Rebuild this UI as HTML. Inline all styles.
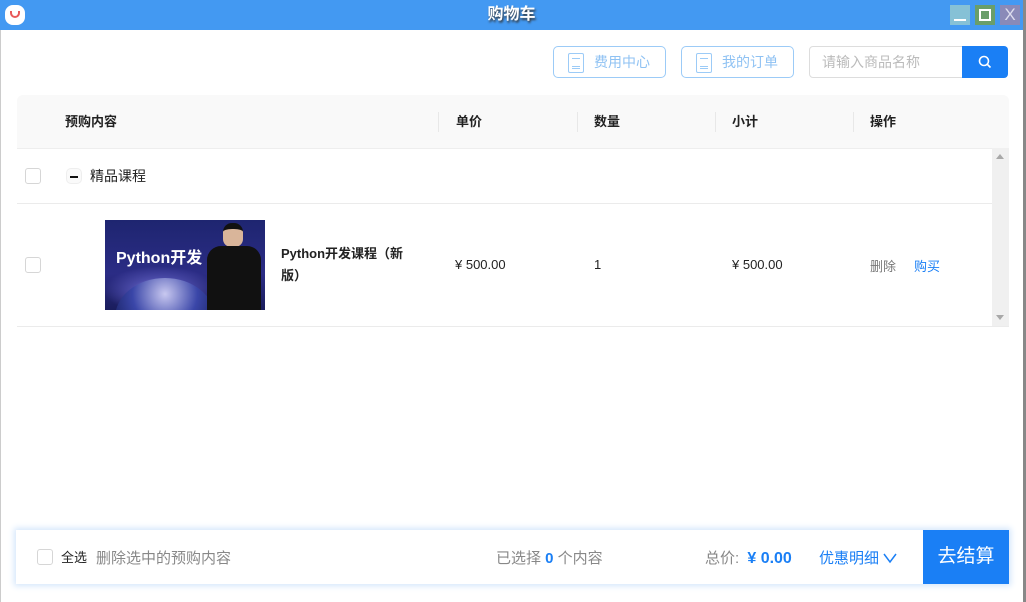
<!DOCTYPE html>
<html><head><meta charset="utf-8"><style>
*{margin:0;padding:0;box-sizing:border-box}
body{width:1026px;height:602px;overflow:hidden;background:#fff;font-family:"Liberation Sans","Noto Sans CJK SC",sans-serif;position:relative;font-size:13px;color:#222}
.abs{position:absolute}
.title{left:0;top:0;width:1023px;height:30px;background:#4399f2;color:#fff;text-align:center;line-height:30px;font-size:16px;font-weight:bold;text-shadow:1px 2px 2px #333}
.wb{top:5px;width:20px;height:20px}
.btn{top:46px;height:32px;border:1px solid #9ccbf7;border-radius:5px;color:#8fc2f3;font-size:14px;line-height:30px;padding-left:40px}
.doc{position:absolute;left:14px;top:6px;width:16px;height:20px;border:1.5px solid #9ccbf7;border-radius:2px}
.doc:before{content:"";position:absolute;left:3px;right:3px;top:4px;height:7px;border-top:1.5px solid #9ccbf7;border-bottom:1.5px solid #9ccbf7}
.doc:after{content:"";position:absolute;left:3px;right:3px;top:14px;border-top:1.5px solid #9ccbf7}
.th{top:95px;left:17px;width:992px;height:54px;background:#f9f9f9;border-radius:6px 6px 0 0;border-bottom:1px solid #eee}
.th span{position:absolute;top:16px;font-weight:bold;font-size:13px}
.sep{position:absolute;top:17px;width:1px;height:20px;background:#e8e8e8}
.cb{width:16px;height:16px;border:1px solid #d6d6d6;border-radius:3px;background:#fff}
.line{height:1px;background:#ebebeb;left:17px;width:975px}
</style></head><body>
<div class="abs title">购物车</div>
<div class="abs" style="left:5px;top:5px;width:20px;height:20px;border-radius:8px;background:#fff"><div style="position:absolute;left:5px;top:6px;width:10px;height:7px;border:2px solid #e85a5a;border-top:none;border-radius:0 0 6px 6px"></div></div>
<div class="abs wb" style="left:950px;background:#86c1d6"><div style="position:absolute;left:4px;top:14px;width:12px;height:2px;background:#fff"></div></div>
<div class="abs wb" style="left:975px;background:#6a9e6a"><div style="position:absolute;left:4px;top:4px;width:12px;height:12px;border:2px solid #fff"></div></div>
<div class="abs wb" style="left:1000px;background:#8a8ab8;color:#dde;font-size:17px;line-height:20px;text-align:center">X</div>
<div class="abs" style="left:1023px;top:0;width:3px;height:602px;background:#888"></div>
<div class="abs" style="left:0;top:30px;width:1px;height:572px;background:#ccc"></div>

<div class="abs btn" style="left:553px;width:113px"><i class="doc"></i>费用中心</div>
<div class="abs btn" style="left:681px;width:113px"><i class="doc"></i>我的订单</div>
<div class="abs" style="left:809px;top:46px;width:155px;height:32px;border:1px solid #ddd;border-radius:4px 0 0 4px;color:#bbb;font-size:14px;line-height:30px;padding-left:12px">请输入商品名称</div>
<div class="abs" style="left:962px;top:46px;width:46px;height:32px;background:#1a7ff5;border-radius:0 4px 4px 0">
<svg width="46" height="32"><circle cx="22" cy="15" r="4.5" stroke="#fff" stroke-width="1.6" fill="none"/><line x1="25.5" y1="18.5" x2="28.5" y2="21.5" stroke="#fff" stroke-width="1.6"/></svg></div>

<div class="abs th"><span style="left:48px">预购内容</span><i class="sep" style="left:421px"></i><span style="left:439px">单价</span><i class="sep" style="left:560px"></i><span style="left:577px">数量</span><i class="sep" style="left:698px"></i><span style="left:715px">小计</span><i class="sep" style="left:836px"></i><span style="left:853px">操作</span></div>

<div class="abs" style="left:992px;top:148px;width:17px;height:178px;background:#f0f0f0"><div style="position:absolute;left:4px;top:6px;border:4px solid transparent;border-bottom:5px solid #a8a8a8;border-top:none"></div><div style="position:absolute;left:4px;bottom:6px;border:4px solid transparent;border-top:5px solid #a8a8a8;border-bottom:none"></div></div>

<div class="abs cb" style="left:25px;top:168px"></div>
<div class="abs" style="left:66px;top:168px;width:16px;height:16px;border-radius:5px;background:#fafafa;border:1px solid #eee"><div style="position:absolute;left:3px;top:7px;width:8px;height:1.5px;background:#111"></div></div>
<div class="abs" style="left:90px;top:166px;font-size:14px">精品课程</div>
<div class="abs line" style="top:203px"></div>

<div class="abs cb" style="left:25px;top:257px"></div>
<div class="abs" style="left:105px;top:220px;width:160px;height:90px;background:radial-gradient(ellipse 70px 30px at 55px 70px,#a99be0 0%,#4a4aa8 40%,transparent 80%),linear-gradient(180deg,#1e2570,#2b2c85 60%,#1a1d5c);overflow:hidden">
<div style="position:absolute;left:11px;top:24px;color:#fff;font-weight:bold;font-size:16px">Python开发</div>
<div style="position:absolute;left:10px;top:58px;width:100px;height:80px;border-radius:50%;background:radial-gradient(circle at 50% 20%,#c8c8f0,#3a46a8 40%,#1b2468 70%)"></div>
<div style="position:absolute;left:118px;top:3px;width:20px;height:24px;border-radius:9px 9px 8px 8px;background:#d9b59a;border-top:6px solid #111"></div>
<div style="position:absolute;left:102px;top:26px;width:54px;height:64px;border-radius:14px 14px 0 0;background:#111"></div>
</div>
<div class="abs" style="left:281px;top:243px;font-weight:bold;font-size:13px;line-height:22px;width:140px">Python开发课程（新版）</div>
<div class="abs" style="left:455px;top:257px">¥ 500.00</div>
<div class="abs" style="left:594px;top:257px">1</div>
<div class="abs" style="left:732px;top:257px">¥ 500.00</div>
<div class="abs" style="left:870px;top:256px;color:#777">删除</div>
<div class="abs" style="left:914px;top:256px;color:#1a7ff5">购买</div>
<div class="abs line" style="top:326px;width:992px"></div>

<div class="abs" style="left:16px;top:530px;width:993px;height:54px;background:#fff;box-shadow:0 0 6px 2px #d4e6fb">
<div class="abs cb" style="left:21px;top:19px"></div>
<div class="abs" style="left:45px;top:17px;font-size:13px">全选</div>
<div class="abs" style="left:80px;top:17px;font-size:15px;color:#888">删除选中的预购内容</div>
<div class="abs" style="left:480px;top:17px;font-size:15px;color:#888">已选择 <b style="color:#1a7ff5">0</b> 个内容</div>
<div class="abs" style="left:689px;top:17px;font-size:15px;color:#888">总价: <b style="color:#1a7ff5;font-size:16px;margin-left:4px">¥ 0.00</b></div>
<div class="abs" style="left:803px;top:17px;font-size:15px;color:#1a7ff5">优惠明细 <svg width="14" height="12" style="vertical-align:-1px"><polyline points="1,2 7,10 13,2" fill="none" stroke="#1a7ff5" stroke-width="1.5"/></svg></div>
<div class="abs" style="left:907px;top:0;width:86px;height:54px;background:#1a7ff5;color:#fff;font-size:19px;line-height:54px;text-align:center">去结算</div>
</div>
</body></html>
